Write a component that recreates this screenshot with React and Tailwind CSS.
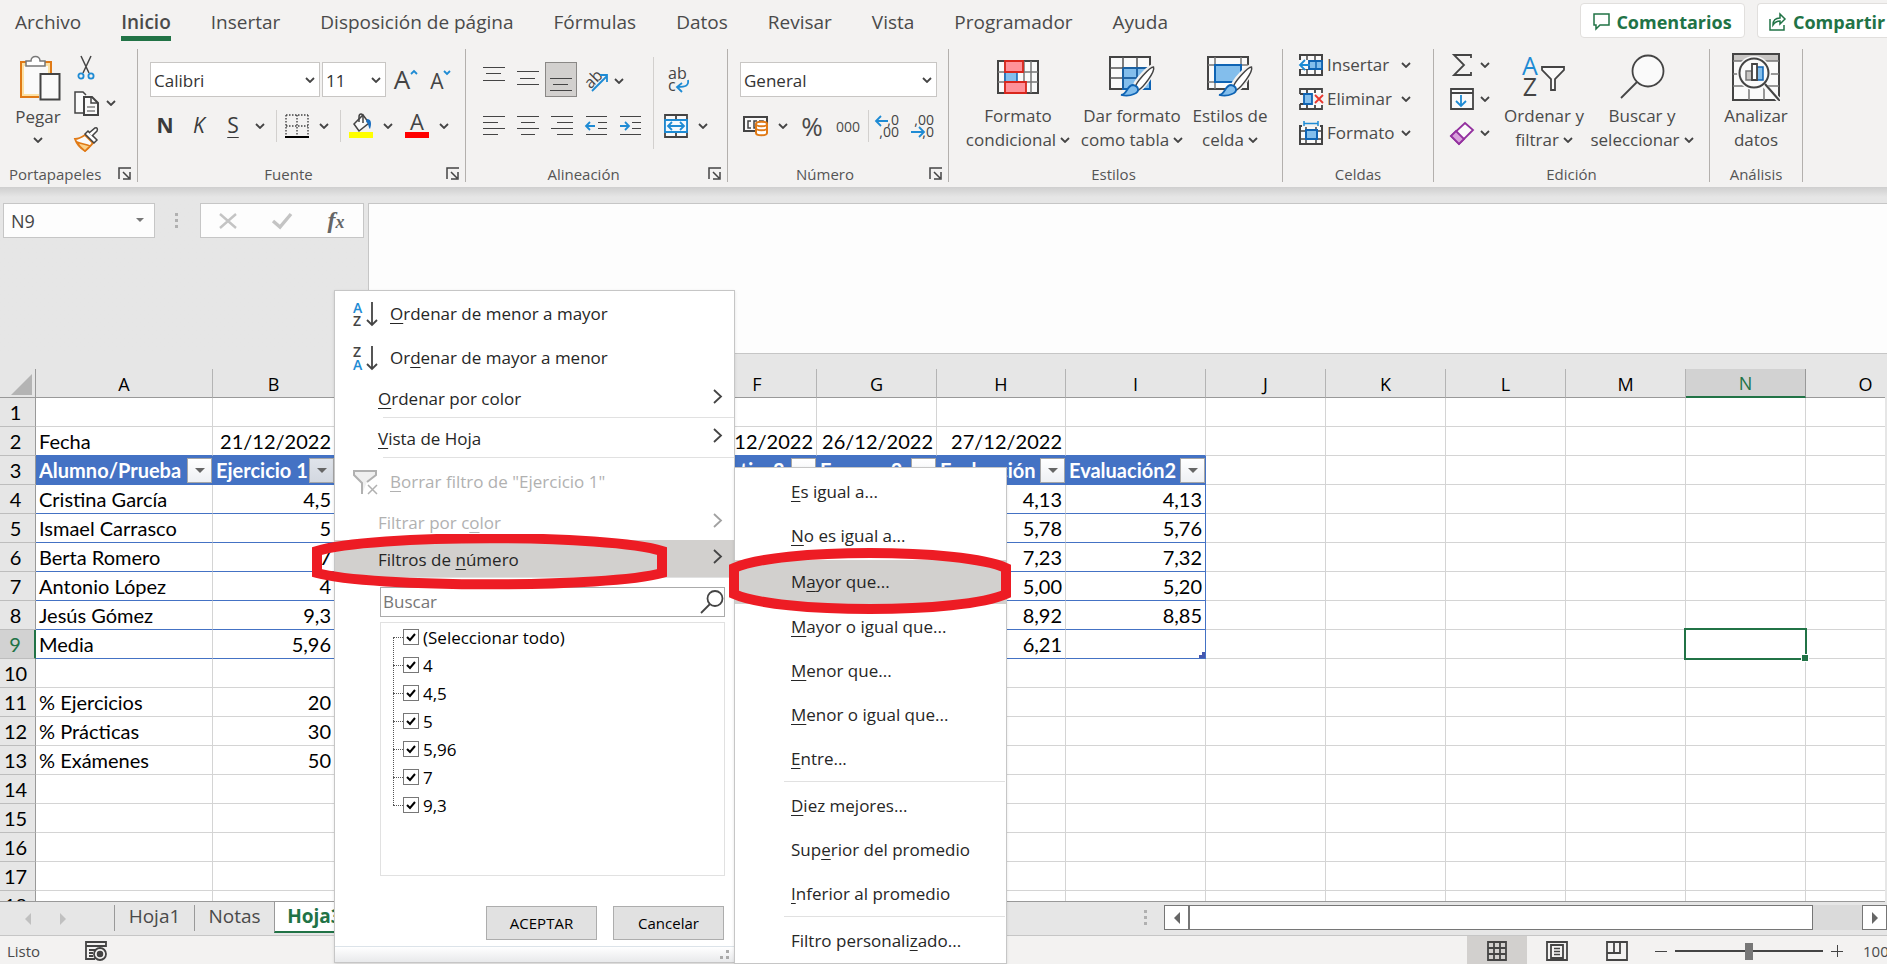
import clsx from "clsx";

const TABS = ["Archivo", "Inicio", "Insertar", "Disposición de página", "Fórmulas", "Datos", "Revisar", "Vista", "Programador", "Ayuda"];

const COLUMNS = [
  ["A", "w-[177px]"],
  ["B", "w-[122px]"],
  ["C", "w-[121px]"],
  ["D", "w-[121px]"],
  ["E", "w-[121px]"],
  ["F", "w-[119px]"],
  ["G", "w-[120px]"],
  ["H", "w-[129px]"],
  ["I", "w-[140px]"],
  ["J", "w-[120px]"],
  ["K", "w-[120px]"],
  ["L", "w-[120px]"],
  ["M", "w-[120px]"],
  ["N", "w-[120px]"],
  ["O", "w-[120px]"],
];

const CELLS = {
  2: { A: "Fecha", B: "21/12/2022", F: "23/12/2022", G: "26/12/2022", H: "27/12/2022" },
  3: { A: "Alumno/Prueba", B: "Ejercicio 1", F: "Práctica2", G: "Examen2", H: "Evaluación", I: "Evaluación2" },
  4: { A: "Cristina García", B: "4,5", H: "4,13", I: "4,13" },
  5: { A: "Ismael Carrasco", B: "5", H: "5,78", I: "5,76" },
  6: { A: "Berta Romero", B: "7", H: "7,23", I: "7,32" },
  7: { A: "Antonio López", B: "4", H: "5,00", I: "5,20" },
  8: { A: "Jesús Gómez", B: "9,3", H: "8,92", I: "8,85" },
  9: { A: "Media", B: "5,96", H: "6,21" },
  11: { A: "% Ejercicios", B: "20" },
  12: { A: "% Prácticas", B: "30" },
  13: { A: "% Exámenes", B: "50" },
};

const ROWS = Array.from({ length: 18 }, (_, i) => i + 1);
const VALUES = ["(Seleccionar todo)", "4", "4,5", "5", "5,96", "7", "9,3"];

/* ---------- small helpers ---------- */

// "&" marks the letter to underline
function Mnemonic({ text }) {
  const at = text.indexOf("&");
  return (
    <span className="whitespace-pre">
      {text.slice(0, at)}
      <span className="underline decoration-1 underline-offset-3">{text[at + 1]}</span>
      {text.slice(at + 2)}
    </span>
  );
}

function Chevron({ className }) {
  return (
    <svg viewBox="0 0 10 6" className={clsx("h-1.5 w-2.5 shrink-0", className)} fill="none" stroke="#444" strokeWidth="1.8">
      <path d="M1 1l4 4 4-4" />
    </svg>
  );
}

function Svg({ w, h, children, className }) {
  return (
    <svg width={w} height={h} viewBox={`0 0 ${w} ${h}`} fill="none" stroke="#444" strokeWidth="1.5" className={clsx("shrink-0 overflow-visible", className)}>
      {children}
    </svg>
  );
}

function IconButton({ label, className, children }) {
  return (
    <button type="button" aria-label={label} className={clsx("flex shrink-0 items-center justify-center", className)}>
      {children}
    </button>
  );
}

function Launcher({ label }) {
  return (
    <IconButton label={label} className="absolute right-1 bottom-0 size-4">
      <Svg w={14} h={14}>
        <path d="M1 12V1h12M5 5l6 6M12 5v7H5" />
      </Svg>
    </IconButton>
  );
}

function Group({ label, launcher, className, labelClassName, children }) {
  return (
    <section aria-label={label} className={clsx("flex shrink-0 flex-col border-r border-[#b3b0ad]", className)}>
      <div className="flex h-[118px]">{children}</div>
      <div className={clsx("relative text-center text-[15px] leading-[15px] text-[#555]", labelClassName)}>
        {label}
        {launcher && <Launcher label={`Configuración de ${label}`} />}
      </div>
    </section>
  );
}

function Divider({ className }) {
  return <span className={clsx("w-px shrink-0 bg-[#d2d0ce]", className)} />;
}

function SelectBox({ label, value, className }) {
  return (
    <div className={clsx("relative h-[35px] shrink-0 border border-[#c8c6c4] bg-white", className)}>
      <select aria-label={label} className="size-full appearance-none pt-0.5 pl-[3px] text-[17px] text-[#333] outline-none">
        <option>{value}</option>
      </select>
      <Chevron className="pointer-events-none absolute top-3.5 right-1" />
    </div>
  );
}

function BigButton({ icon, lines, arrow, className }) {
  return (
    <button type="button" className={clsx("flex shrink-0 flex-col items-center text-[17px] leading-6 whitespace-nowrap text-[#4a4a4a]", className)}>
      <span className="flex h-[55px] items-center">{icon}</span>
      <span>{lines[0]}</span>
      <span className="flex items-center gap-1">
        {lines[1]}
        {arrow && <Chevron />}
      </span>
    </button>
  );
}

/* ---------- ribbon icons ---------- */

function Lines({ rows, h = 24 }) {
  return (
    <Svg w={22} h={h} className="[shape-rendering:crispEdges]">
      {rows.map(([x1, x2, y]) => (
        <path key={y} d={`M${x1} ${y}H${x2}`} strokeWidth="1" />
      ))}
    </Svg>
  );
}

const PasteIcon = () => (
  <Svg w={42} h={46}>
    <path d="M2 7h30v35H2z" fill="#fce1a4" stroke="#e07a16" strokeWidth="2" />
    <path d="M5 11h24v28H5z" fill="#fafafa" stroke="none" />
    <path d="M7 11V6h5c0-6 9-6 9 0h5v5z" fill="#fff" stroke="#777" />
    <path d="M20 18h22v28H20z" fill="#f3f2f1" stroke="none" />
    <path d="M21.5 19h19v25.5h-19z" fill="#fafafa" strokeWidth="2" />
  </Svg>
);

const ScissorsIcon = () => (
  <Svg w={18} h={25}>
    <path d="M4 1l8 17M14 1L6 18" />
    <circle cx="4" cy="21" r="2.6" stroke="#1e8bd4" strokeWidth="1.8" />
    <circle cx="14" cy="21" r="2.6" stroke="#1e8bd4" strokeWidth="1.8" />
  </Svg>
);

const CopyIcon = () => (
  <Svg w={25} h={25}>
    <path d="M9 22H1V1h8l3 3" fill="#fafafa" />
    <path d="M10 6h8l6 6v12H10z" fill="#fafafa" strokeWidth="2" />
    <path d="M17 6v6h6" />
    <path d="M13 16h8M13 20h8" strokeWidth="1" />
  </Svg>
);

const BrushIcon = () => (
  <Svg w={25} h={25}>
    <path d="M1 12c4 0 7-2 10-4l8 8c-2 2-4 5-8 8C6 21 3 18 1 12z" fill="#fafafa" stroke="#e07a16" strokeWidth="1.8" />
    <path d="M3 15c5 2 9 2 13 4l-5 5C7 21 5 19 3 15z" fill="#fbd28b" stroke="#e07a16" />
    <path d="M11 7l3-3 9 9-3 3z" fill="#fff" />
    <path d="M15 6l6-5c2-1 3 1 2 3l-5 5" fill="#fff" />
  </Svg>
);

const BordersIcon = () => (
  <Svg w={24} h={24}>
    <path d="M1 1h22M1 12h22M1 1v20M12 1v20M23 1v20" strokeDasharray="1.5 1.5" strokeWidth="1.4" />
    <path d="M0 23h24" stroke="#000" strokeWidth="2" />
  </Svg>
);

const FillIcon = () => (
  <Svg w={24} h={26}>
    <path d="M5 11l9-9 6 8-10 8z" fill="#fafafa" />
    <path d="M10 9V4c0-4 4-4 4 0v6" />
    <path d="M18 6c4 0 5 4 3 10-2-2-1-6-4-7z" fill="#1a6ec0" stroke="none" />
    <path d="M0 19h24v6H0z" fill="#ff0" stroke="none" />
  </Svg>
);

const OrientationIcon = () => (
  <Svg w={26} h={26}>
    <text x="1" y="19" transform="rotate(-45 8 14)" fontSize="16" fill="#444" stroke="none">ab</text>
    <path d="M8 24L23 9M16 8h7v7" stroke="#1e8bd4" strokeWidth="1.8" />
  </Svg>
);

const WrapIcon = () => (
  <Svg w={24} h={28}>
    <text x="2" y="13" fontSize="16" fill="#444" stroke="none">ab</text>
    <text x="2" y="25" fontSize="16" fill="#444" stroke="none">c</text>
    <path d="M22 14c1 6-3 7-10 7M16 17l-5 4 5 5" stroke="#1e8bd4" strokeWidth="1.8" />
  </Svg>
);

const MergeIcon = () => (
  <Svg w={24} h={24}>
    <path d="M1 1h22v22H1zM12 1v4M12 19v4" fill="#fafafa" strokeWidth="1.8" />
    <path d="M1 6h22v12H1z" fill="#f4f9fd" stroke="#1e8bd4" strokeWidth="1.8" />
    <path d="M4 12h16M8 8l-4 4 4 4M16 8l4 4-4 4" stroke="#1e8bd4" strokeWidth="1.8" />
  </Svg>
);

const IndentIcon = ({ right }) => (
  <Svg w={23} h={22}>
    <path d="M1 1.5h21M13 7.5h9M13 13.5h9M1 19.5h21" strokeWidth="1" />
    <path d={right ? "M1 11h9M6 7l4 4-4 4" : "M10 11H1M5 7l-4 4 4 4"} stroke="#1e8bd4" strokeWidth="1.8" />
  </Svg>
);

const CurrencyIcon = () => (
  <Svg w={25} h={22}>
    <path d="M1 2h23v14H1z" fill="#fafafa" strokeWidth="2" />
    <path d="M8 6H5v7h3M14 6h-3v7h2M20 7V6h-4" />
    <path d="M13 9c0-3 11-3 11 0v9c0 3-11 3-11 0z" fill="#fff" stroke="#e07a16" strokeWidth="2" />
    <path d="M13 9c0 3 11 3 11 0M13 13c0 3 11 3 11 0" stroke="#e07a16" strokeWidth="1.8" />
  </Svg>
);

const DecimalIcon = ({ more }) => (
  <Svg w={25} h={26}>
    <text x="24" y="12" textAnchor="end" fontSize="14" fill="#444" stroke="none">{more ? ",0" : ",00"}</text>
    <text x="24" y="24" textAnchor="end" fontSize="14" fill="#444" stroke="none">{more ? ",00" : ",0"}</text>
    <path d={more ? "M13 8H1M6 3L1 8l5 5" : "M1 19h12M9 14l5 5-5 5"} stroke="#1e8bd4" strokeWidth="1.8" />
  </Svg>
);

const PaintBrush = () => (
  <g>
    <path d="M45 10c-2-2-21 16-19 21l3 3C34 34 47 13 45 10z" fill="#fff" stroke="#f3f2f1" strokeWidth="4" />
    <path d="M44.5 11c-4 0-18 16-18 20l3 3c4-2 17-18 15-23z" fill="#fff" />
    <path d="M12 39c6 0 6-10 12-10 6 1 7 7 1 9-4 2-9 2-13 1z" fill="#83beec" stroke="#0f64b4" strokeWidth="1.8" />
  </g>
);

const ConditionalIcon = () => (
  <Svg w={42} h={42}>
    <path d="M1 5h40v32H1z" fill="#fafafa" strokeWidth="2" />
    <path d="M8 5v32M34 5v32M27 5v32M1 16h40M1 26h40" stroke="#777" />
    <path d="M8 16h12v10H8z" fill="#83beec" stroke="#0f64b4" />
    <path d="M8 5h18v11H8zM8 26h21v11H8z" fill="#ff9199" stroke="#d9261c" strokeWidth="1.8" />
  </Svg>
);

const TableFormatIcon = () => (
  <Svg w={46} h={42}>
    <path d="M1 1h40v32H1z" fill="#fafafa" strokeWidth="2" />
    <path d="M14 12h27v21H14z" fill="#83beec" stroke="#0f64b4" strokeWidth="2" />
    <path d="M14 1v32M28 1v32M1 12h40M1 22h40" stroke="#555" />
    <path d="M14 12v21M28 12v21M14 12h27M14 22h27" stroke="#0f64b4" />
    <PaintBrush />
  </Svg>
);

const CellStylesIcon = () => (
  <Svg w={46} h={42}>
    <path d="M1 1h40v32H1z" fill="#fafafa" strokeWidth="2" />
    <path d="M8 1v32M34 1v32M1 9h40M1 26h40" stroke="#777" />
    <path d="M8 9h26v17H8z" fill="#83beec" stroke="#0f64b4" strokeWidth="2" />
    <PaintBrush />
  </Svg>
);

const InsertCellsIcon = () => (
  <Svg w={24} h={24}>
    <path d="M1 2h22v20H1z" fill="#fafafa" strokeWidth="2" />
    <path d="M8 2v20M16 2v20M1 8h22M1 16h22" />
    <path d="M0 7h12v9H0z" fill="#fafafa" stroke="none" />
    <path d="M10 8h13v8H10z" fill="#83beec" stroke="#0f64b4" strokeWidth="1.8" />
    <path d="M17 8v8" stroke="#0f64b4" />
    <path d="M11 12H1M6 7l-5 5 5 5" stroke="#1e8bd4" strokeWidth="1.8" />
  </Svg>
);

const DeleteCellsIcon = () => (
  <Svg w={24} h={24}>
    <path d="M1 2h22v5H1zM1 17h22v5H1z" fill="#fafafa" stroke="none" />
    <path d="M1 7V2h22v4M1 17v5h22v-4M8 2v20M16 2v4M16 18v4M1 7h5M1 17h5" strokeWidth="1.8" />
    <path d="M5 7h8v10H5z" fill="#83beec" stroke="#0f64b4" strokeWidth="1.8" />
    <path d="M16 8l8 8M24 8l-8 8" stroke="#e8352c" strokeWidth="1.8" />
  </Svg>
);

const FormatCellsIcon = () => (
  <Svg w={24} h={24}>
    <path d="M1 5h22v18H1z" fill="#fafafa" strokeWidth="2" />
    <path d="M7 5v18M17 5v18M1 10h22M1 18h22" />
    <path d="M3 0h18v6H3z" fill="#f3f2f1" stroke="none" />
    <path d="M7 9h11v9H7z" fill="#83beec" stroke="#0f64b4" strokeWidth="2" />
    <path d="M5 0v5M19 0v5M5 2.5h14" stroke="#1e8bd4" />
  </Svg>
);

const SigmaIcon = () => (
  <Svg w={24} h={24}>
    <path d="M21 5V2H4l10 10L4 22h17v-3" strokeWidth="1.8" />
  </Svg>
);

const FillDownIcon = () => (
  <Svg w={24} h={24}>
    <path d="M1 2h22v20H1zM1 6h22" fill="#fafafa" strokeWidth="1.8" />
    <path d="M11 8v11M6 14l5 5 5-5" stroke="#1e8bd4" strokeWidth="1.8" />
  </Svg>
);

const EraserIcon = () => (
  <Svg w={24} h={24}>
    <path d="M15 2l8 7L9 23l-8-8z" fill="#fafafa" stroke="#93319f" strokeWidth="1.8" />
    <path d="M6 10l8 8-5 5-8-8z" fill="#d9a0dc" stroke="#93319f" strokeWidth="1.8" />
  </Svg>
);

const SortFilterIcon = () => (
  <Svg w={44} h={42}>
    <text x="8" y="19" textAnchor="middle" fontSize="25" fill="#1e8bd4" stroke="none">A</text>
    <text x="8" y="40" textAnchor="middle" fontSize="25" fill="#444" stroke="none">Z</text>
    <path d="M20 11h22v3l-9 9v11h-4V23l-9-9z" fill="#fafafa" strokeWidth="1.8" />
  </Svg>
);

const FindIcon = () => (
  <Svg w={46} h={46}>
    <circle cx="29" cy="17" r="15.5" fill="#fafafa" strokeWidth="1.8" />
    <path d="M18 28L2 44" strokeWidth="1.8" />
  </Svg>
);

const AnalyzeIcon = () => (
  <Svg w={48} h={48}>
    <path d="M1 1h46v46H1z" fill="#fafafa" strokeWidth="2" />
    <path d="M2 2h44v6H2z" fill="#c8c6c4" stroke="none" />
    <path d="M1 8h46M1 21h46M1 33h46M17 33v14M32 33v14" stroke="#777" />
    <circle cx="22" cy="20" r="17" fill="#fafafa" stroke="none" />
    <path d="M31 31l16 16" stroke="#fafafa" strokeWidth="5" />
    <circle cx="22" cy="20" r="14.5" fill="#fafafa" strokeWidth="2" />
    <path d="M33 31l14 16" strokeWidth="2" />
    <path d="M14 18h6v9h-6z" fill="#c8c6c4" stroke="#777" />
    <path d="M25 14h6v13h-6z" fill="#83beec" stroke="#0f64b4" />
    <path d="M20 11h5v16h-5z" fill="#fff" strokeWidth="1.8" />
  </Svg>
);

/* ---------- top bar ---------- */

function TabBar() {
  return (
    <header className="flex h-11 shrink-0 items-start justify-between overflow-hidden">
      <nav className="flex gap-10 pl-[15px] text-[19px] text-[#4a4a4a]">
        {TABS.map((tab) => (
          <a
            key={tab}
            href="#"
            className={clsx("h-[41px] pt-2 leading-7 whitespace-nowrap", tab === "Inicio" && "border-b-5 border-[#217346] font-semibold")}
          >
            {tab}
          </a>
        ))}
      </nav>
      <div className="flex gap-3 pt-[3px] text-[18px] leading-6 font-bold text-[#217346]">
        <button type="button" className="flex h-[35px] w-[165px] items-center justify-center gap-1.5 rounded-sm border border-[#e1dfdd] bg-white pt-0.5">
          <Svg w={17} h={17} className="stroke-[#217346]">
            <path d="M1 1h15v11H7l-4 4v-4H1z" />
          </Svg>
          Comentarios
        </button>
        <button type="button" className="flex h-[35px] w-[130px] items-center gap-[7px] overflow-hidden rounded-l-sm border border-r-0 border-[#e1dfdd] bg-white pt-0.5 pl-[11px]">
          <Svg w={17} h={18} className="stroke-[#217346]">
            <path d="M1 6v11h14v-5M4 12c0-5 3-7 7-7V1l5 5-5 5V8c-3 0-5 1-7 4z" />
          </Svg>
          Compartir
        </button>
      </div>
    </header>
  );
}

function Ribbon() {
  return (
    <div className="flex h-[143px] shrink-0 overflow-hidden pt-[5px] pb-[5px]">
      <Group label="Portapapeles" launcher className="w-[138px]" labelClassName="pl-[9px] !text-left">
        <button type="button" className="flex w-[66px] shrink-0 flex-col items-center pt-1.5 pl-3.5 text-[17px] leading-6 text-[#4a4a4a]">
          <PasteIcon />
          <span className="mt-1 pr-1">Pegar</span>
          <Chevron className="mt-2 mr-1" />
        </button>
        <div className="flex flex-col gap-3 pt-1.5 pl-2">
          <IconButton label="Cortar" className="h-6 w-6"><ScissorsIcon /></IconButton>
          <div className="flex items-center gap-2">
            <IconButton label="Copiar" className="h-6 w-6"><CopyIcon /></IconButton>
            <Chevron />
          </div>
          <IconButton label="Copiar formato" className="h-6 w-6"><BrushIcon /></IconButton>
        </div>
      </Group>

      <Group label="Fuente" launcher className="w-[328px]" labelClassName="pr-[26px]">
        <div className="flex flex-col gap-3 pt-[13px] pl-3">
          <div className="flex gap-0.5">
            <SelectBox label="Fuente" value="Calibri" className="w-[170px]" />
            <SelectBox label="Tamaño" value="11" className="w-[64px]" />
            <IconButton label="Aumentar tamaño" className="ml-1 w-7">
              <Svg w={24} h={24}>
                <text x="8" y="21" textAnchor="middle" fontSize="26" fill="#444" stroke="none">A</text>
                <path d="M17 6l3-3 3 3" stroke="#1e8bd4" strokeWidth="1.8" />
              </Svg>
            </IconButton>
            <IconButton label="Disminuir tamaño" className="ml-1 w-7">
              <Svg w={24} h={24}>
                <text x="9" y="21" textAnchor="middle" fontSize="21" fill="#444" stroke="none">A</text>
                <path d="M16 3l3 3 3-3" stroke="#1e8bd4" strokeWidth="1.8" />
              </Svg>
            </IconButton>
          </div>
          <div className="flex h-[34px] items-center text-[21px] text-[#3b3b3b]">
            <button type="button" className="w-[30px] font-bold">N</button>
            <button type="button" className="ml-1 w-[30px] italic">K</button>
            <button type="button" className="ml-1 w-[30px] underline decoration-1 underline-offset-4">S</button>
            <Chevron className="ml-[7px]" />
            <Divider className="ml-[11px] h-8" />
            <IconButton label="Bordes" className="ml-2"><BordersIcon /></IconButton>
            <Chevron className="ml-2.5" />
            <Divider className="ml-[11px] h-8" />
            <IconButton label="Color de relleno" className="ml-2"><FillIcon /></IconButton>
            <Chevron className="ml-2.5" />
            <IconButton label="Color de fuente" className="ml-3">
              <Svg w={24} h={26}>
                <text x="12" y="17" textAnchor="middle" fontSize="22" fill="#444" stroke="none">A</text>
                <path d="M0 19h24v6H0z" fill="#f00" stroke="none" />
              </Svg>
            </IconButton>
            <Chevron className="ml-2.5" />
          </div>
        </div>
      </Group>

      <Group label="Alineación" launcher className="w-[262px]" labelClassName="pr-[26px]">
        <div className="flex flex-col gap-3 pt-[13px] pl-[11px]">
          <div className="flex h-[35px]">
            <IconButton label="Alinear arriba" className="w-[34px]"><Lines rows={[[0, 22, 5.5], [3, 18, 11.5], [0, 22, 18.5]]} h={36} /></IconButton>
            <IconButton label="Alinear en medio" className="w-[34px]"><Lines rows={[[0, 22, 9.5], [3, 18, 16.5], [0, 22, 22.5]]} h={36} /></IconButton>
            <IconButton label="Alinear abajo" className="w-8 border border-[#8a8886] bg-[#d2d0ce]"><Lines rows={[[0, 22, 15.5], [3, 18, 21.5], [0, 22, 27.5]]} h={34} /></IconButton>
            <IconButton label="Orientación" className="ml-[7px]"><OrientationIcon /></IconButton>
            <Chevron className="mt-4 ml-1" />
          </div>
          <div className="flex h-[34px]">
            <IconButton label="Alinear a la izquierda" className="w-[34px]"><Lines rows={[[0, 22, 2.5], [0, 15, 8.5], [0, 22, 14.5], [0, 15, 20.5]]} /></IconButton>
            <IconButton label="Centrar" className="w-[34px]"><Lines rows={[[0, 22, 2.5], [4, 18, 8.5], [0, 22, 14.5], [4, 18, 20.5]]} /></IconButton>
            <IconButton label="Alinear a la derecha" className="w-[34px]"><Lines rows={[[0, 22, 2.5], [6, 22, 8.5], [0, 22, 14.5], [6, 22, 20.5]]} /></IconButton>
            <IconButton label="Disminuir sangría" className="w-[34px]"><IndentIcon /></IconButton>
            <IconButton label="Aumentar sangría" className="w-[34px]"><IndentIcon right /></IconButton>
          </div>
        </div>
        <Divider className="mt-2 ml-1.5 h-[92px]" />
        <div className="flex flex-col gap-3 pt-[13px] pl-2.5">
          <IconButton label="Ajustar texto" className="h-[35px] w-7"><WrapIcon /></IconButton>
          <div className="flex h-[34px] items-center gap-2.5">
            <IconButton label="Combinar y centrar"><MergeIcon /></IconButton>
            <Chevron />
          </div>
        </div>
      </Group>

      <Group label="Número" launcher className="w-[221px]" labelClassName="pr-[26px]">
        <div className="flex flex-col gap-3 pt-[13px] pl-3">
          <SelectBox label="Formato de número" value="General" className="w-[197px]" />
          <div className="flex h-[34px] items-center text-[#4a4a4a]">
            <IconButton label="Formato de contabilidad" className="ml-[3px]"><CurrencyIcon /></IconButton>
            <Chevron className="ml-2.5" />
            <button type="button" className="ml-2 w-8 text-[26px] leading-8">%</button>
            <button type="button" className="ml-1.5 w-7 text-[14px]">000</button>
            <Divider className="ml-1.5 h-8" />
            <IconButton label="Aumentar decimales" className="ml-1.5"><DecimalIcon more /></IconButton>
            <IconButton label="Disminuir decimales" className="ml-2.5"><DecimalIcon /></IconButton>
          </div>
        </div>
      </Group>

      <Group label="Estilos" className="w-[334px]" labelClassName="pr-1">
        <BigButton className="ml-3 w-[114px]" icon={<ConditionalIcon />} lines={["Formato", "condicional"]} arrow />
        <BigButton className="w-[114px]" icon={<TableFormatIcon />} lines={["Dar formato", "como tabla"]} arrow />
        <BigButton className="w-[82px]" icon={<CellStylesIcon />} lines={["Estilos de", "celda"]} arrow />
      </Group>

      <Group label="Celdas" className="w-[151px]">
        <div className="flex flex-col gap-2.5 pt-1 pl-4 text-[17px] leading-6 text-[#4a4a4a]">
          {[
            ["Insertar", InsertCellsIcon],
            ["Eliminar", DeleteCellsIcon],
            ["Formato", FormatCellsIcon],
          ].map(([label, Icon]) => (
            <button key={label} type="button" className="flex w-[112px] items-center gap-1">
              <Icon />
              {label}
              <Chevron className="ml-auto" />
            </button>
          ))}
        </div>
      </Group>

      <Group label="Edición" className="w-[276px]">
        <div className="flex flex-col gap-2.5 pt-1 pl-4">
          {[
            ["Autosuma", SigmaIcon],
            ["Rellenar", FillDownIcon],
            ["Borrar", EraserIcon],
          ].map(([label, Icon]) => (
            <IconButton key={label} label={label} className="gap-1.5">
              <Icon />
              <Chevron />
            </IconButton>
          ))}
        </div>
        <BigButton className="ml-2 w-[92px]" icon={<SortFilterIcon />} lines={["Ordenar y", "filtrar"]} arrow />
        <BigButton className="w-[104px]" icon={<FindIcon />} lines={["Buscar y", "seleccionar"]} arrow />
      </Group>

      <Group label="Análisis" className="w-[93px]">
        <BigButton className="w-[92px]" icon={<AnalyzeIcon />} lines={["Analizar", "datos"]} />
      </Group>
    </div>
  );
}

function FormulaBar() {
  return (
    <div className="flex h-[167px] shrink-0 items-start bg-linear-to-b from-[#cfcfcf] to-[#e6e6e6] to-[10px] pt-4">
      <div className="relative ml-[3px] h-[35px] w-[152px] border border-[#c6c6c6] bg-[#fdfdfd]">
        <input aria-label="Cuadro de nombres" defaultValue="N9" className="size-full pl-[7px] text-[18px] text-[#444] outline-none" />
        <span className="absolute top-[14px] right-2.5 border-x-4 border-t-4 border-x-transparent border-t-[#777]" />
      </div>
      <div className="ml-5 flex h-[35px] w-[3px] flex-col items-center justify-center gap-[3px]">
        <i className="size-[3px] bg-[#b0b0b0]" />
        <i className="size-[3px] bg-[#b0b0b0]" />
        <i className="size-[3px] bg-[#b0b0b0]" />
      </div>
      <div className="ml-[22px] flex h-[35px] w-[164px] items-center border border-[#c6c6c6] bg-[#fdfdfd]">
        <IconButton label="Cancelar" className="ml-4 w-[22px]">
          <Svg w={18} h={16}><path d="M1 1l16 14M17 1L1 15" stroke="#c4c4c4" strokeWidth="2.4" /></Svg>
        </IconButton>
        <IconButton label="Introducir" className="ml-8 w-[22px]">
          <Svg w={20} h={16}><path d="M1 8l7 6L19 1" stroke="#c4c4c4" strokeWidth="3.4" /></Svg>
        </IconButton>
        <button type="button" className="ml-8 w-[22px] font-['Liberation_Serif',serif] text-[24px] leading-8 font-bold text-[#666] italic">
          f<span className="text-[18px]">x</span>
        </button>
      </div>
      <textarea
        aria-label="Barra de fórmulas"
        className="ml-1 h-[151px] flex-1 resize-none border border-r-0 border-[#c6c6c6] bg-[#fdfdfd] outline-none"
      />
    </div>
  );
}

/* ---------- sheet ---------- */

function FilterButton({ label, active }) {
  return (
    <button
      type="button"
      aria-label={`Filtrar ${label}`}
      className={clsx(
        "flex size-[25px] shrink-0 items-center justify-center border border-[#a6a6a6] bg-linear-to-b",
        active ? "from-[#dfe3ea] to-[#d3d8e0]" : "from-white to-[#eef0f4]"
      )}
    >
      <span className="border-x-5 border-t-5 border-x-transparent border-t-[#666]" />
    </button>
  );
}

function Cell({ row, col }) {
  const inTable = row >= 3 && row <= 9 && col <= "I";
  const value = CELLS[row]?.[col] ?? "";

  if (inTable && row === 3) {
    return (
      <th scope="col" className="h-[29px] border-b border-[#4472c4] bg-[#4472c4] p-0 text-left font-bold text-white">
        {value && (
          <div className="flex h-7 items-center overflow-hidden pr-px pl-[3px]">
            <span className="flex-1 overflow-hidden leading-7 whitespace-nowrap">{value}</span>
            <FilterButton label={value} active={col === "B"} />
          </div>
        )}
      </th>
    );
  }

  return (
    <td
      className={clsx(
        "relative h-[29px] border-r border-b p-0 px-[3px] leading-7 whitespace-nowrap",
        inTable || (row === 2 && col <= "I") ? "border-b-[#4472c4]" : "border-b-[#d4d4d4]",
        inTable && col === "I" ? "border-r-[#4472c4]" : "border-r-[#d4d4d4]",
        col !== "A" && "text-right"
      )}
    >
      {value}
      {row === 9 && col === "I" && <span className="absolute right-0 bottom-0 size-1.5 border-r-3 border-b-3 border-[#4558b0]" />}
      {row === 9 && col === "N" && (
        <span className="absolute -top-0.5 -right-0.5 -bottom-0.5 -left-0.5 z-10 border-2 border-[#217346]">
          <span className="absolute -right-1 -bottom-1 size-2 border border-white bg-[#217346]" />
        </span>
      )}
    </td>
  );
}

function Sheet() {
  return (
    <main className="min-h-0 flex-1 overflow-hidden bg-[#e6e6e6] pt-[15px] pr-0.5">
      <div className="h-full overflow-hidden border-b border-[#999]">
        <table className="w-[1926px] table-fixed border-separate border-spacing-0 bg-white font-['Lato','Open_Sans',sans-serif] text-[20px] text-black">
          <colgroup>
            <col className="w-9" />
            {COLUMNS.map(([name, width]) => (
              <col key={name} className={width} />
            ))}
          </colgroup>
          <thead className="font-['Open_Sans',sans-serif] text-[18px]">
            <tr>
              <th className="h-[29px] border-r border-b border-[#999] bg-[#e6e6e6] p-0">
                <div className="flex justify-end pt-0.5 pr-[3px]">
                  <span className="border-b-21 border-l-21 border-b-[#b4b4b4] border-l-transparent" />
                </div>
              </th>
              {COLUMNS.map(([name]) => (
                <th
                  key={name}
                  scope="col"
                  className={clsx(
                    "h-[29px] border-r p-0 pt-0.5 leading-[25px] font-normal",
                    name === "N" ? "border-b-2 border-r-[#999] border-b-[#217346] bg-[#d2d2d2] text-[#217346]" : "border-b border-r-[#b4b4b4] border-b-[#999] bg-[#e6e6e6]"
                  )}
                >
                  {name}
                </th>
              ))}
            </tr>
          </thead>
          <tbody>
            {ROWS.map((row) => (
              <tr key={row}>
                <th
                  scope="row"
                  className={clsx(
                    "h-[29px] border-b border-b-[#bdbdbd] p-0 pr-1 leading-7 font-normal",
                    row === 9 ? "border-r-2 border-r-[#217346] bg-[#d2d2d2] text-[#217346]" : "border-r border-r-[#999] bg-[#e6e6e6]"
                  )}
                >
                  {row}
                </th>
                {COLUMNS.map(([name]) => (
                  <Cell key={name} row={row} col={name} />
                ))}
              </tr>
            ))}
          </tbody>
        </table>
      </div>
    </main>
  );
}

function SheetTabs() {
  return (
    <div className="flex h-[34px] shrink-0 justify-between border-b border-[#c6c6c6] bg-[#e6e6e6]">
      <div className="flex text-[19px] text-[#4a4a4a]">
        <div className="flex w-[114px] items-center gap-[29px] pl-[25px]">
          <button type="button" aria-label="Hoja anterior" className="border-y-6 border-r-6 border-y-transparent border-r-[#c0c0c0]" />
          <button type="button" aria-label="Hoja siguiente" className="border-y-6 border-l-6 border-y-transparent border-l-[#c0c0c0]" />
        </div>
        <button type="button" className="mt-[3px] h-[26px] w-20 border-l border-[#999] pb-1 leading-[22px]">Hoja1</button>
        <button type="button" className="mt-[3px] h-[26px] w-20 border-l border-[#999] pb-1 leading-[22px]">Notas</button>
        <button type="button" className="h-[31px] w-20 border-b-2 border-l border-b-[#217346] border-l-[#999] bg-white font-bold text-[#217346]">
          Hoja3
        </button>
      </div>
      <div className="flex items-start pt-[3px]">
        <div className="mr-[17px] flex h-[25px] flex-col items-center justify-center gap-[3px]">
          <i className="size-[3px] bg-[#b0b0b0]" />
          <i className="size-[3px] bg-[#b0b0b0]" />
          <i className="size-[3px] bg-[#b0b0b0]" />
        </div>
        <IconButton label="Desplazar a la izquierda" className="h-[25px] w-[25px] border border-[#767676] bg-white">
          <span className="border-y-6 border-r-6 border-y-transparent border-r-[#666]" />
        </IconButton>
        <div className="flex h-[25px] w-[673px] bg-[#dadada]">
          <span className="w-[624px] border border-[#767676] bg-white" />
        </div>
        <IconButton label="Desplazar a la derecha" className="h-[25px] w-[25px] border border-[#767676] bg-white">
          <span className="border-y-6 border-l-6 border-y-transparent border-l-[#666]" />
        </IconButton>
      </div>
    </div>
  );
}

function StatusBar() {
  return (
    <footer className="flex h-7 shrink-0 items-center justify-between overflow-hidden bg-[#f3f2f1] text-[15px] text-[#4a4a4a]">
      <div className="flex items-center gap-[45px] pt-0.5 pl-[7px]">
        Listo
        <IconButton label="Grabar macro">
          <Svg w={22} h={20}>
            <path d="M21 6V1H1v17h9M1 5h20M4 9h6M4 12h4M4 15h4" strokeWidth="1.8" />
            <circle cx="15" cy="13" r="6" fill="#f3f2f1" strokeWidth="1.8" />
            <circle cx="15" cy="13" r="2.5" fill="#444" />
          </Svg>
        </IconButton>
      </div>
      <div className="flex h-full items-center">
        <IconButton label="Normal" className="h-full w-[60px] bg-[#d2d0ce] pt-0.5">
          <Svg w={20} h={20}><path d="M1 1h18v18H1zM7 1v18M13 1v18M1 7h18M1 13h18" strokeWidth="1.8" /></Svg>
        </IconButton>
        <IconButton label="Diseño de página" className="w-[60px] pt-0.5">
          <Svg w={22} h={20}><path d="M1 1h20v18H1zM5 4h12v13H5z" strokeWidth="1.8" /><path d="M8 7.5h6M8 10.5h6M8 13.5h6" strokeWidth="1.4" /></Svg>
        </IconButton>
        <IconButton label="Salto de página" className="w-[60px] pt-0.5">
          <Svg w={22} h={20}><path d="M1 1h20v18H1zM1 12h13V1M8 1v11" strokeWidth="1.8" /></Svg>
        </IconButton>
        <IconButton label="Alejar" className="ml-2 pt-0.5">
          <Svg w={12} h={12}><path d="M0 6.5h12" strokeWidth="1" /></Svg>
        </IconButton>
        <input
          type="range"
          aria-label="Zoom"
          defaultValue="50"
          className="mt-0.5 ml-2 h-[18px] w-[148px] appearance-none bg-[linear-gradient(#444,#444)] bg-[length:100%_2px] bg-center bg-no-repeat [&::-webkit-slider-thumb]:h-[17px] [&::-webkit-slider-thumb]:w-2 [&::-webkit-slider-thumb]:appearance-none [&::-webkit-slider-thumb]:bg-[#777]"
        />
        <IconButton label="Acercar" className="ml-2 pt-0.5">
          <Svg w={12} h={12}><path d="M0 6.5h12M6.5 0v12" strokeWidth="1" /></Svg>
        </IconButton>
        <span className="ml-5 w-6 pt-0.5">100</span>
      </div>
    </footer>
  );
}

/* ---------- menus ---------- */

function SortIcon({ top, bottom }) {
  return (
    <span className="flex w-[25px] shrink-0 items-center gap-1">
      <span className="flex flex-col text-[14px] leading-[13px] font-semibold">
        <span className={top === "A" ? "text-[#1e8bd4]" : "text-[#444]"}>{top}</span>
        <span className={bottom === "A" ? "text-[#1e8bd4]" : "text-[#444]"}>{bottom}</span>
      </span>
      <Svg w={12} h={25}><path d="M6 0v23M1 18l5 5 5-5" strokeWidth="1.8" /></Svg>
    </span>
  );
}

function MenuRow({ text, icon, arrow, disabled, className }) {
  return (
    <button
      type="button"
      disabled={disabled}
      className={clsx("flex w-full items-center pt-0.5 text-left", icon ? "pl-[18px]" : "pl-[43px]", disabled && "text-[#b1b1b1]", className)}
    >
      {icon}
      <span className={clsx(icon && "ml-3")}>
        <Mnemonic text={text} />
      </span>
      {arrow && (
        <Svg w={9} h={15} className={clsx("mr-3 ml-auto mb-1.5", disabled && "opacity-50")}>
          <path d="M1 1l7 6.5L1 14" strokeWidth="1.8" />
        </Svg>
      )}
    </button>
  );
}

function FilterMenu() {
  return (
    <div className="absolute top-[290px] left-[334px] z-20 w-[401px] border border-[#c6c6c6] bg-white text-[17px] text-[#262626] shadow-sm">
      <MenuRow className="h-11" text="&Ordenar de menor a mayor" icon={<SortIcon top="A" bottom="Z" />} />
      <MenuRow className="h-11" text="Or&denar de mayor a menor" icon={<SortIcon top="Z" bottom="A" />} />
      <MenuRow className="h-[38px]" text="&Ordenar por color" arrow />
      <hr className="ml-12 border-[#e1e1e1]" />
      <MenuRow className="h-[39px]" text="&Vista de Hoja" arrow />
      <hr className="ml-12 border-[#e1e1e1]" />
      <MenuRow
        className="h-[46px]"
        text={'&Borrar filtro de "Ejercicio 1"'}
        disabled
        icon={
          <Svg w={25} h={25} className="stroke-[#b1b1b1]">
            <path d="M14 12l9-7V1H1v4l8 8v11" fill="#f0f0f0" strokeWidth="2" />
            <path d="M15 15l9 9M24 15l-9 9" />
          </Svg>
        }
      />
      <MenuRow className="h-9" text="Filtrar por c&olor" arrow disabled />
      <MenuRow className="h-[37px] bg-[#d2d0ce]" text="Filtros de &número" arrow />
      <hr className="ml-12 border-[#e1e1e1]" />

      <div className="mt-[9px] mr-[9px] ml-[45px] flex h-[30px] items-center border border-[#ababab]">
        <input aria-label="Buscar" placeholder="Buscar" className="min-w-0 flex-1 pl-0.5 outline-none placeholder:text-[#767676]" />
        <Svg w={24} h={24}>
          <circle cx="15" cy="8.5" r="7.5" strokeWidth="1.8" />
          <path d="M10 14L1 23" strokeWidth="1.8" />
        </Svg>
      </div>

      <ul className="relative mt-[5px] mr-[9px] ml-[45px] h-[254px] border border-[#e1e1e1] pl-3 text-black">
        <span className="absolute top-3.5 left-3 h-[168px] border-l border-dotted border-[#555]" />
        {VALUES.map((value) => (
          <li key={value} className="flex h-7 items-center">
            <span className="w-2.5 border-t border-dotted border-[#555]" />
            <label className="flex items-center gap-1">
              <span className="relative flex size-4">
                <input type="checkbox" defaultChecked className="peer size-4 appearance-none border border-[#777] bg-white" />
                <svg viewBox="0 0 16 16" className="pointer-events-none absolute inset-0 size-4 opacity-0 peer-checked:opacity-100" fill="none" stroke="#000" strokeWidth="2">
                  <path d="M4 8l3 3 5-6" />
                </svg>
              </span>
              <span className="pt-0.5">{value}</span>
            </label>
          </li>
        ))}
      </ul>

      <div className="mt-[30px] mr-2.5 flex justify-end gap-4 text-[15px] text-black">
        <button type="button" className="h-[34px] w-[111px] border border-[#adadad] bg-[#e1e1e1]">ACEPTAR</button>
        <button type="button" className="h-[34px] w-[111px] border border-[#adadad] bg-[#e1e1e1]">Cancelar</button>
      </div>
      <div className="mt-1.5 flex h-4 items-end justify-end gap-[3px] border-t border-[#dce3e9] bg-linear-to-b from-white to-[#e8e9eb] pr-[5px] pb-[3px]">
        <i className="size-[3px] bg-[#aaa]" />
        <span className="flex flex-col gap-[3px]">
          <i className="size-[3px] bg-[#aaa]" />
          <i className="size-[3px] bg-[#aaa]" />
        </span>
      </div>
    </div>
  );
}

function SubItem({ text, className }) {
  return (
    <button type="button" className={clsx("flex h-11 w-full items-center pl-14 text-left", className)}>
      <Mnemonic text={text} />
    </button>
  );
}

function NumberFilterMenu() {
  return (
    <div className="absolute top-[467px] left-[734px] z-30 w-[273px] border border-[#c6c6c6] bg-white pt-0.5 text-[17px] text-[#262626] shadow-sm">
      <SubItem text="&Es igual a..." />
      <SubItem text="&No es igual a..." />
      <SubItem text="M&ayor que..." className="mt-0.5 mb-px bg-[#d2d0ce]" />
      <SubItem text="&Mayor o igual que..." />
      <SubItem text="&Menor que..." />
      <SubItem text="&Menor o igual que..." />
      <SubItem text="&Entre..." />
      <hr className="mr-px mb-0.5 ml-[49px] border-[#e1e1e1]" />
      <SubItem text="&Diez mejores..." />
      <SubItem text="Sup&erior del promedio" />
      <SubItem text="&Inferior al promedio" />
      <hr className="mr-px mb-0.5 ml-[49px] border-[#e1e1e1]" />
      <SubItem text="Filtro personali&zado..." />
    </div>
  );
}

// hand-drawn red rings over the chosen menu entries
function Highlights() {
  return (
    <>
      <svg className="pointer-events-none absolute top-[534px] left-[312px] z-40" width="356" height="56" viewBox="0 0 356 56" fill="none" stroke="#ed1c24" strokeWidth="10">
        <path d="M5 17C58 0 298 0 350 17V39C298 54 58 54 5 39z" />
      </svg>
      <svg className="pointer-events-none absolute top-[548px] left-[728px] z-40" width="284" height="67" viewBox="0 0 284 67" fill="none" stroke="#ed1c24" strokeWidth="10">
        <path d="M6 20C50 0 234 0 278 20V46C234 66 50 66 6 46z" />
      </svg>
    </>
  );
}

export default function App() {
  return (
    <div className="relative flex h-screen flex-col overflow-hidden bg-[#f3f2f1] font-['Open_Sans','Noto_Sans',sans-serif]">
      <TabBar />
      <Ribbon />
      <FormulaBar />
      <Sheet />
      <SheetTabs />
      <StatusBar />
      <FilterMenu />
      <NumberFilterMenu />
      <Highlights />
    </div>
  );
}
